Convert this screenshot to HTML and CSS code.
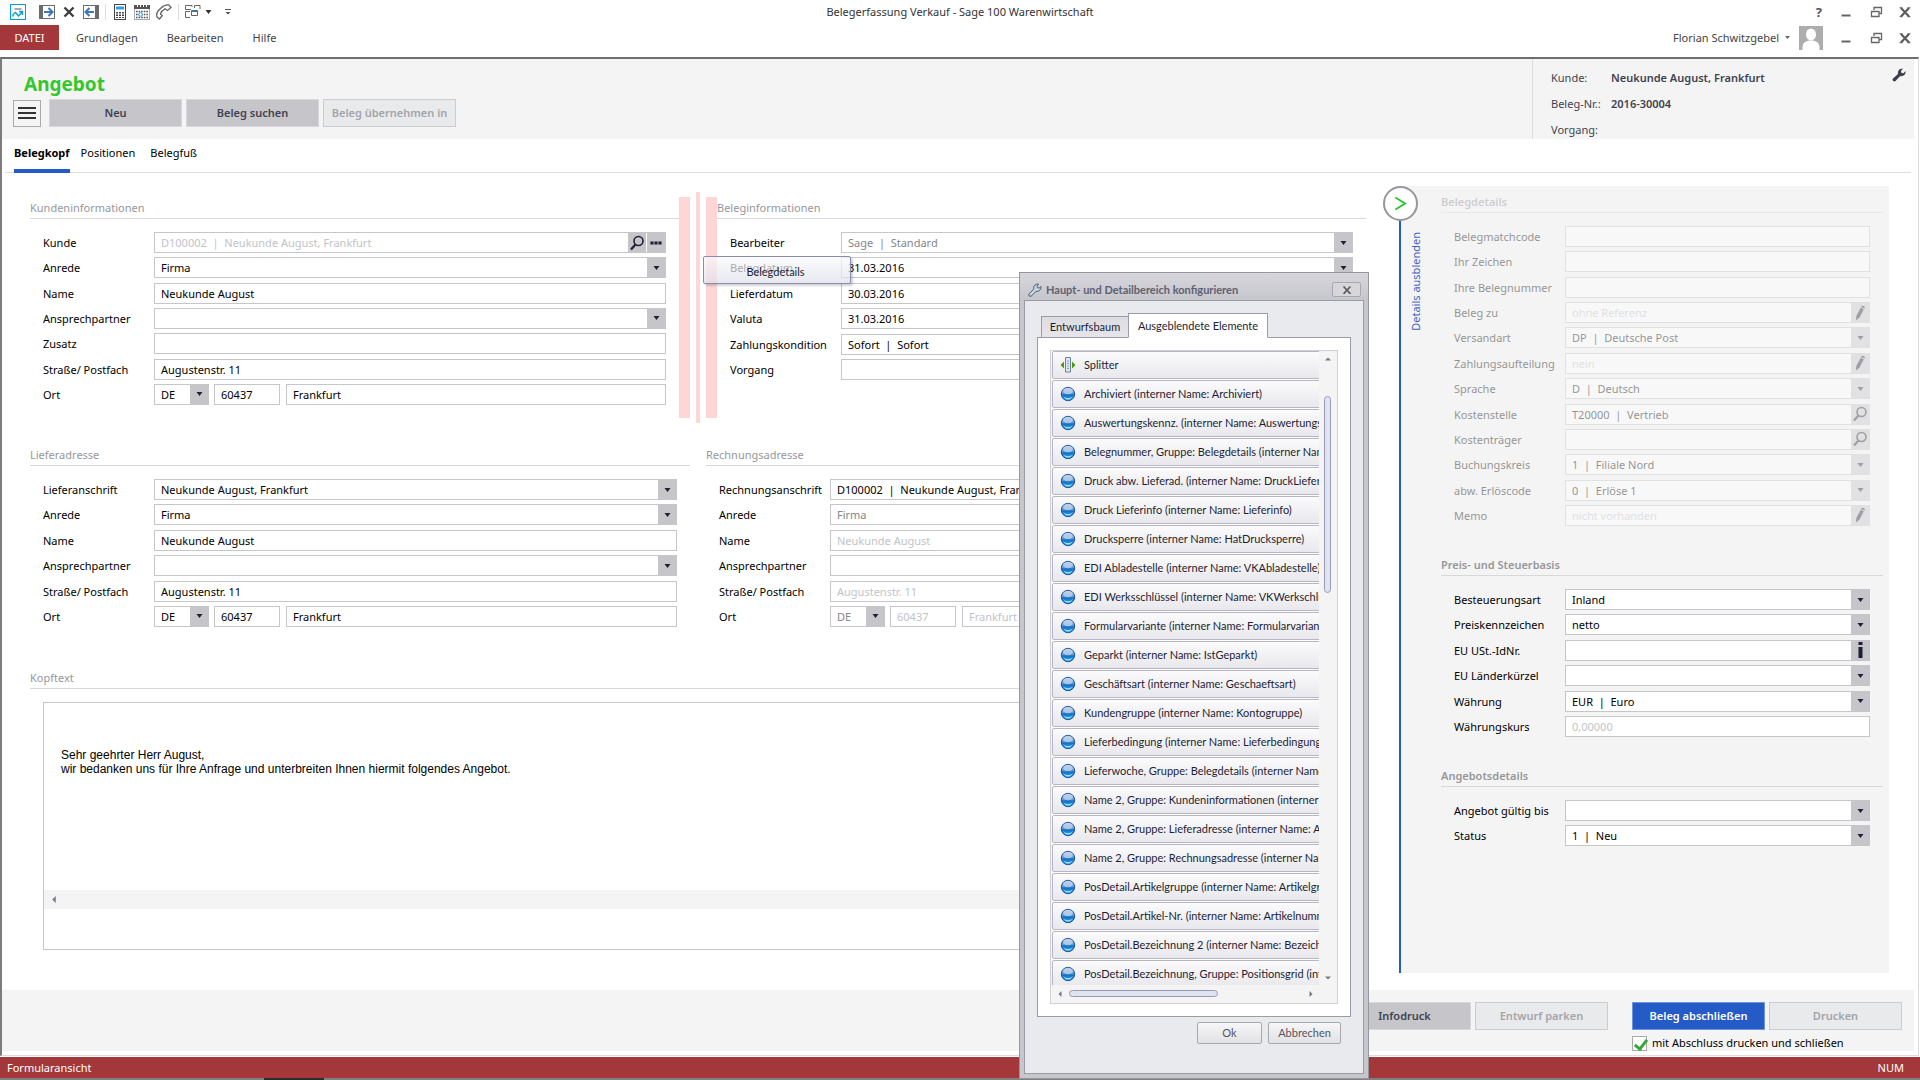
FILE: index.html
```html
<!DOCTYPE html>
<html lang="de">
<head>
<meta charset="utf-8">
<title>Belegerfassung Verkauf - Sage 100 Warenwirtschaft</title>
<link rel="stylesheet" href="styles.css">
</head>
<body>
<svg class="sprite" aria-hidden="true">
  <symbol id="arrow" viewBox="0 0 7 4"><path d="M0.500 0H6.500L3.500 4Z" fill="currentColor"/></symbol>
  <symbol id="lens" viewBox="0 0 16 16"><circle cx="9.500" cy="6" r="4.500" fill="none" stroke="currentColor" stroke-width="1.600"/><path d="M6.500 9.500L2 14.500" stroke="currentColor" stroke-width="2.200"/></symbol>
  <symbol id="pencil" viewBox="0 0 16 18"><path d="M10 1.500L13 3L7.500 13.500L4 16.500L4.300 12Z" fill="currentColor"/><path d="M9.300 3.500L12 5" stroke="#fff" stroke-width="0.800"/></symbol>
  <symbol id="dots" viewBox="0 0 14 5"><path d="M0 0.500h4v4h-4zM5 0.500h4v4h-4zM10 0.500h4v4h-4z" fill="currentColor"/></symbol>
  <symbol id="info" viewBox="0 0 5 17"><path d="M0.500 0h4v3h-4zM0.500 5h4v11h-4z" fill="currentColor"/></symbol>
  <symbol id="min" viewBox="0 0 16 16"><path d="M3.500 10.500h9v2h-9z" fill="#666"/></symbol>
  <symbol id="restore" viewBox="0 0 16 16"><path d="M6 6V3.500H13.500V9.500H11M5.500 3.500H14M3.500 7.500H11V12.500H3.500ZM3 7.500H11.500" fill="none" stroke="#666" stroke-width="1.300"/></symbol>
  <symbol id="cross" viewBox="0 0 16 16"><path d="M4 4L12 12.500M12 4L4 12.500" stroke="#5c5c5c" stroke-width="2.200"/><path d="M2.500 3.800h3M10.500 3.800h3M2.500 12.700h3M10.500 12.700h3" stroke="#5c5c5c" stroke-width="1"/></symbol>
  <symbol id="ball" viewBox="0 0 16 16"><circle cx="8" cy="8" r="6.700" fill="url(#ballFill)" stroke="#1d55a0" stroke-width="1"/><ellipse cx="8" cy="5" rx="5" ry="3.200" fill="#fff" opacity="0.450"/><path d="M2.800 10Q8 17 13.200 10Q8 14.500 2.800 10" fill="#a8e6ff"/></symbol>
  <symbol id="splitter" viewBox="0 0 16 16"><path d="M5.500 0.500H10.500V15H5.500Z" fill="#dce8f0" stroke="#6c8296"/><path d="M8 3.500V13.500" stroke="#44607a" stroke-width="1" stroke-dasharray="1 1.500"/><path d="M4 4.500V11.500L0.500 8ZM12 4.500V11.500L15.500 8Z" fill="#4f9a08"/></symbol>
  <defs><linearGradient id="ballFill" x1="0" y1="0" x2="0" y2="1"><stop offset="0" stop-color="#8fb0d8"/><stop offset="0.500" stop-color="#5c95d0"/><stop offset="0.560" stop-color="#0f6bc0"/><stop offset="1" stop-color="#35b0f0"/></linearGradient></defs>
</svg>

<header class="titlebar">
  <div class="quick">
    <svg class="app-icon" viewBox="0 0 16 16"><rect x="0.500" y="0.500" width="15" height="15" fill="#fff" stroke="#009fda"/><path d="M4.500 5h7" stroke="#555" stroke-width="1"/><path d="M3 12.500V10.500L5.500 8.500L8.500 12L12.500 7.500M12.500 11V7.500H9" fill="none" stroke="#009fda" stroke-width="1.400"/></svg>
    <svg class="ic ic-in" viewBox="0 0 16 14"><path d="M0 0h4v14H0z" fill="#6b6b6b"/><rect x="3.500" y="0.500" width="12" height="13" fill="#fff" stroke="#6b6b6b"/><path d="M5 7H13M9.500 3L13.500 7L9.500 11" fill="none" stroke="#3b78b5" stroke-width="2"/></svg>
    <svg class="ic ic-x" viewBox="0 0 12 12"><path d="M1.500 1.500L10.500 10.500M10.500 1.500L1.500 10.500" stroke="#3f3f3f" stroke-width="2.400"/></svg>
    <svg class="ic ic-out" viewBox="0 0 16 14"><path d="M12 0h4v14h-4z" fill="#6b6b6b"/><rect x="0.500" y="0.500" width="12" height="13" fill="#fff" stroke="#6b6b6b"/><path d="M11 7H3M6.500 3L2.500 7L6.500 11" fill="none" stroke="#3b78b5" stroke-width="2"/></svg>
    <span class="sep"></span>
    <svg class="ic-calc" viewBox="0 0 12 16"><rect x="0.500" y="0.500" width="11" height="15" fill="#fff" stroke="#444"/><path d="M2 2.500h8v3H2z" fill="#2f9bea"/><path d="M2 8h2v1.500H2zM5 8h2v1.500H5zM8 8h2v1.500H8zM2 10.500h2V12H2zM5 10.500h2V12H5zM8 10.500h2V12H8zM2 13h2v1H2zM5 13h2v1H5zM8 13h2v1H8z" fill="#444"/></svg>
    <svg class="ic-cal" viewBox="0 0 16 16"><rect x="0.500" y="1.500" width="15" height="14" fill="#fff" stroke="#aaa"/><path d="M0 1h16v4H0z" fill="#555"/><path d="M3.500 0v3M6.500 0v3M9.500 0v3M12.500 0v3" stroke="#fff"/><path d="M2 7.500h12M2 10.500h12M2 13.500h12" stroke="#555" stroke-width="1.600" stroke-dasharray="1.600 1"/><circle cx="6.500" cy="10.500" r="1.800" fill="#fff" stroke="#2f9bea"/></svg>
    <svg class="ic-tel" viewBox="0 0 16 16"><path d="M1 13Q-0.500 8.500 4.500 4.500Q8.500 0.500 13 1L15 3.500L11.500 6.500L9 4.800Q5.500 6.500 4.500 10L6.300 11.500L3.500 15Z" fill="#fff" stroke="#666" stroke-width="1.300"/></svg>
    <span class="sep"></span>
    <svg class="ic-win" viewBox="0 0 16 14"><path d="M6 4.500H0.500V0.500H7V2M15 4V0.500H9.500V3M5 6.500H0.500V12.500H5M6.500 5.500H12.500V10.500H6.500Z" fill="none" stroke="#666"/><path d="M7 6h6M7 6.500h5" stroke="#3b78b5"/></svg>
    <svg class="tri" viewBox="0 0 7 4"><path d="M0.500 0H6.500L3.500 4Z" fill="#333"/></svg>
    <svg class="more" viewBox="0 0 6 6"><path d="M0 0h6v1H0zM0.500 3h5L3 5.500z" fill="#555"/></svg>
  </div>
  <h1 class="win-title">Belegerfassung Verkauf - Sage 100 Warenwirtschaft</h1>
  <div class="win-ctl">
    <b class="help">?</b>
    <svg><use href="#min"/></svg><svg><use href="#restore"/></svg><svg><use href="#cross"/></svg>
  </div>
</header>

<nav class="menubar">
  <button class="file">DATEI</button>
  <a href="#">Grundlagen</a><a href="#">Bearbeiten</a><a href="#">Hilfe</a>
  <div class="user">
    <span>Florian Schwitzgebel</span>
    <svg class="user-tri" viewBox="0 0 7 4"><path d="M1 0H6L3.500 3Z" fill="#666"/></svg>
    <svg class="avatar" viewBox="0 0 24 24"><path d="M0 0h24v24H0z" fill="#adadad"/><ellipse cx="12" cy="8.500" rx="5" ry="6" fill="#fff"/><path d="M3.500 24Q3 16.500 7 15.500L10 14.500H14L17 15.500Q21 16.500 20.500 24Z" fill="#fff"/></svg>
    <div class="win-ctl"><svg><use href="#min"/></svg><svg><use href="#restore"/></svg><svg><use href="#cross"/></svg></div>
  </div>
</nav>

<div class="frame">
  <header class="doc-head">
    <div class="doc-left">
      <h2>Angebot</h2>
      <div class="actions">
        <button class="burger" aria-label="Menü"><i></i><i></i><i></i></button>
        <button class="btn">Neu</button>
        <button class="btn">Beleg suchen</button>
        <button class="btn off" disabled>Beleg übernehmen in</button>
      </div>
    </div>
    <dl class="doc-info">
      <dt>Kunde:</dt><dd>Neukunde August, Frankfurt</dd>
      <dt>Beleg-Nr.:</dt><dd>2016-30004</dd>
      <dt>Vorgang:</dt><dd></dd>
    </dl>
    <svg class="wrench" viewBox="0 0 14 14"><path d="M1 13L0.500 11L6 6Q5.500 2.500 8 1L11 0.500L9 3L9.500 5L11.500 5.200L13.500 3Q14 7 10.500 8L8 8.200L3 13.500Z" fill="#3b3f4c"/></svg>
  </header>

  <nav class="tabs"><a class="on" href="#">Belegkopf</a><a href="#">Positionen</a><a href="#">Belegfuß</a></nav>

  <div class="content">
    <main class="form">
      <div class="pair split">
        <section>
          <h3>Kundeninformationen</h3>
          <div class="rows r7">
            <div class="row"><label for="k1">Kunde</label><div class="fld"><input class="pale" id="k1" value="D100002 &nbsp;|&nbsp; Neukunde August, Frankfurt"><span class="bt"><svg class="i-lens"><use href="#lens"/></svg></span><span class="bt gap"><svg class="i-dots"><use href="#dots"/></svg></span></div></div>
            <div class="row"><label for="k2">Anrede</label><div class="fld"><select id="k2"><option>Firma</option></select><span class="bt"><svg><use href="#arrow"/></svg></span></div></div>
            <div class="row"><label for="k3">Name</label><div class="fld"><input id="k3" value="Neukunde August"></div></div>
            <div class="row"><label for="k4">Ansprechpartner</label><div class="fld"><select id="k4"><option></option></select><span class="bt"><svg><use href="#arrow"/></svg></span></div></div>
            <div class="row"><label for="k5">Zusatz</label><div class="fld"><input id="k5"></div></div>
            <div class="row"><label for="k6">Straße/ Postfach</label><div class="fld"><input id="k6" value="Augustenstr. 11"></div></div>
            <div class="row"><label for="k7">Ort</label><div class="fld land"><select id="k7"><option>DE</option></select><span class="bt"><svg><use href="#arrow"/></svg></span></div><div class="fld plz"><input aria-label="PLZ" value="60437"></div><div class="fld"><input aria-label="Ort" value="Frankfurt"></div></div>
          </div>
        </section>
        <div class="splitter"><i></i><i class="mid"></i><i></i></div>
        <section>
          <h3>Beleginformationen</h3>
          <div class="rows r6">
            <div class="row"><label for="b1">Bearbeiter</label><div class="fld"><select class="grey" id="b1"><option>Sage &nbsp;|&nbsp; Standard</option></select><span class="bt"><svg><use href="#arrow"/></svg></span></div></div>
            <div class="row"><label for="b2">Belegdatum</label><div class="fld"><select id="b2"><option>31.03.2016</option></select><span class="bt"><svg><use href="#arrow"/></svg></span></div></div>
            <div class="row"><label for="b3">Lieferdatum</label><div class="fld"><select id="b3"><option>30.03.2016</option></select><span class="bt"><svg><use href="#arrow"/></svg></span></div></div>
            <div class="row"><label for="b4">Valuta</label><div class="fld"><select id="b4"><option>31.03.2016</option></select><span class="bt"><svg><use href="#arrow"/></svg></span></div></div>
            <div class="row"><label for="b5">Zahlungskondition</label><div class="fld"><select id="b5"><option>Sofort &nbsp;|&nbsp; Sofort</option></select><span class="bt"><svg><use href="#arrow"/></svg></span></div></div>
            <div class="row"><label for="b6">Vorgang</label><div class="fld"><input id="b6"></div></div>
          </div>
          <div class="ghost">Belegdetails</div>
        </section>
      </div>

      <div class="pair">
        <section>
          <h3>Lieferadresse</h3>
          <div class="rows r6">
            <div class="row"><label for="l1">Lieferanschrift</label><div class="fld"><select id="l1"><option>Neukunde August, Frankfurt</option></select><span class="bt"><svg><use href="#arrow"/></svg></span></div></div>
            <div class="row"><label for="l2">Anrede</label><div class="fld"><select id="l2"><option>Firma</option></select><span class="bt"><svg><use href="#arrow"/></svg></span></div></div>
            <div class="row"><label for="l3">Name</label><div class="fld"><input id="l3" value="Neukunde August"></div></div>
            <div class="row"><label for="l4">Ansprechpartner</label><div class="fld"><select id="l4"><option></option></select><span class="bt"><svg><use href="#arrow"/></svg></span></div></div>
            <div class="row"><label for="l5">Straße/ Postfach</label><div class="fld"><input id="l5" value="Augustenstr. 11"></div></div>
            <div class="row"><label for="l6">Ort</label><div class="fld land"><select id="l6"><option>DE</option></select><span class="bt"><svg><use href="#arrow"/></svg></span></div><div class="fld plz"><input aria-label="PLZ" value="60437"></div><div class="fld"><input aria-label="Ort" value="Frankfurt"></div></div>
          </div>
        </section>
        <section>
          <h3>Rechnungsadresse</h3>
          <div class="rows r6">
            <div class="row"><label for="r1">Rechnungsanschrift</label><div class="fld"><input id="r1" value="D100002 &nbsp;|&nbsp; Neukunde August, Frankfurt"></div></div>
            <div class="row"><label for="r2">Anrede</label><div class="fld"><input class="grey" id="r2" value="Firma"></div></div>
            <div class="row"><label for="r3">Name</label><div class="fld"><input class="pale" id="r3" value="Neukunde August"></div></div>
            <div class="row"><label for="r4">Ansprechpartner</label><div class="fld"><input id="r4"></div></div>
            <div class="row"><label for="r5">Straße/ Postfach</label><div class="fld"><input class="pale" id="r5" value="Augustenstr. 11"></div></div>
            <div class="row"><label for="r6">Ort</label><div class="fld land"><select class="grey" id="r6"><option>DE</option></select><span class="bt"><svg><use href="#arrow"/></svg></span></div><div class="fld plz"><input class="pale" aria-label="PLZ" value="60437"></div><div class="fld"><input class="pale" aria-label="Ort" value="Frankfurt"></div></div>
          </div>
        </section>
      </div>

      <section class="kopf">
        <h3>Kopftext</h3>
        <div class="editor">
          <div class="text">Sehr geehrter Herr August,<br>wir bedanken uns für Ihre Anfrage und unterbreiten Ihnen hiermit folgendes Angebot.</div>
          <div class="hbar"><svg viewBox="0 0 4 8"><path d="M4 0V8L0 4Z" fill="#777785"/></svg></div>
        </div>
      </section>
    </main>

    <aside class="details">
      <div class="rail">
        <button class="round" aria-label="Details ausblenden"><svg viewBox="0 0 14 16"><path d="M1.500 1.500L12 8L1.500 14.500" fill="none" stroke="#2cc42c" stroke-width="2"/></svg></button>
        <a href="#">Details ausblenden</a>
      </div>
      <div class="panel">
        <section class="faded">
          <h3>Belegdetails</h3>
          <div class="rows r12">
            <div class="row"><label for="d1">Belegmatchcode</label><div class="fld"><input id="d1"></div></div>
            <div class="row"><label for="d2">Ihr Zeichen</label><div class="fld"><input id="d2"></div></div>
            <div class="row"><label for="d3">Ihre Belegnummer</label><div class="fld"><input id="d3"></div></div>
            <div class="row"><label for="d4">Beleg zu</label><div class="fld"><input class="pale" id="d4" value="ohne Referenz"><span class="bt"><svg class="i-pen"><use href="#pencil"/></svg></span></div></div>
            <div class="row"><label for="d5">Versandart</label><div class="fld"><select id="d5"><option>DP &nbsp;|&nbsp; Deutsche Post</option></select><span class="bt"><svg><use href="#arrow"/></svg></span></div></div>
            <div class="row"><label for="d6">Zahlungsaufteilung</label><div class="fld"><input class="pale" id="d6" value="nein"><span class="bt"><svg class="i-pen"><use href="#pencil"/></svg></span></div></div>
            <div class="row"><label for="d7">Sprache</label><div class="fld"><select id="d7"><option>D &nbsp;|&nbsp; Deutsch</option></select><span class="bt"><svg><use href="#arrow"/></svg></span></div></div>
            <div class="row"><label for="d8">Kostenstelle</label><div class="fld"><input id="d8" value="T20000 &nbsp;|&nbsp; Vertrieb"><span class="bt"><svg class="i-lens"><use href="#lens"/></svg></span></div></div>
            <div class="row"><label for="d9">Kostenträger</label><div class="fld"><input id="d9"><span class="bt"><svg class="i-lens"><use href="#lens"/></svg></span></div></div>
            <div class="row"><label for="d10">Buchungskreis</label><div class="fld"><select id="d10"><option>1 &nbsp;|&nbsp; Filiale Nord</option></select><span class="bt"><svg><use href="#arrow"/></svg></span></div></div>
            <div class="row"><label for="d11">abw. Erlöscode</label><div class="fld"><select id="d11"><option>0 &nbsp;|&nbsp; Erlöse 1</option></select><span class="bt"><svg><use href="#arrow"/></svg></span></div></div>
            <div class="row"><label for="d12">Memo</label><div class="fld"><input class="pale" id="d12" value="nicht vorhanden"><span class="bt"><svg class="i-pen"><use href="#pencil"/></svg></span></div></div>
          </div>
        </section>
        <section>
          <h3>Preis- und Steuerbasis</h3>
          <div class="rows r6">
            <div class="row"><label for="p1">Besteuerungsart</label><div class="fld"><select id="p1"><option>Inland</option></select><span class="bt"><svg><use href="#arrow"/></svg></span></div></div>
            <div class="row"><label for="p2">Preiskennzeichen</label><div class="fld"><select id="p2"><option>netto</option></select><span class="bt"><svg><use href="#arrow"/></svg></span></div></div>
            <div class="row"><label for="p3">EU USt.-IdNr.</label><div class="fld"><input id="p3"><span class="bt"><svg class="i-info"><use href="#info"/></svg></span></div></div>
            <div class="row"><label for="p4">EU Länderkürzel</label><div class="fld"><select id="p4"><option></option></select><span class="bt"><svg><use href="#arrow"/></svg></span></div></div>
            <div class="row"><label for="p5">Währung</label><div class="fld"><select id="p5"><option>EUR &nbsp;|&nbsp; Euro</option></select><span class="bt"><svg><use href="#arrow"/></svg></span></div></div>
            <div class="row"><label for="p6">Währungskurs</label><div class="fld"><input class="pale" id="p6" value="0,00000"></div></div>
          </div>
        </section>
        <section>
          <h3>Angebotsdetails</h3>
          <div class="rows r2">
            <div class="row"><label for="a1">Angebot gültig bis</label><div class="fld"><select id="a1"><option></option></select><span class="bt"><svg><use href="#arrow"/></svg></span></div></div>
            <div class="row"><label for="a2">Status</label><div class="fld"><select id="a2"><option>1 &nbsp;|&nbsp; Neu</option></select><span class="bt"><svg><use href="#arrow"/></svg></span></div></div>
          </div>
        </section>
      </div>
    </aside>
  </div>

  <footer class="doc-foot">
    <button class="btn">Infodruck</button>
    <button class="btn off" disabled>Entwurf parken</button>
    <div class="finish">
      <div class="finish-btns"><button class="btn blue">Beleg abschließen</button><button class="btn off" disabled>Drucken</button></div>
      <label class="check"><input type="checkbox" checked>mit Abschluss drucken und schließen</label>
    </div>
  </footer>
</div>

<footer class="status"><span>Formularansicht</span><span>NUM</span></footer>
<div class="task"><i></i></div>

<div class="dialog" role="dialog" aria-labelledby="dlg">
  <header>
    <svg viewBox="0 0 14 14"><path d="M1 13L0.800 11L5.500 6.500Q5 2.500 8 1.200L10.500 1L9 3L9.500 4.800L11.200 5L13.200 3.500Q13.500 7 10.500 8.200L8 8.500L3 13.300Z" fill="#c4d4e2" stroke="#4f6478" stroke-width="1"/></svg>
    <h2 id="dlg">Haupt- und Detailbereich konfigurieren</h2>
    <button class="x" aria-label="Schließen"><svg viewBox="0 0 16 16"><use href="#cross"/></svg></button>
  </header>
  <div class="dlg-body">
    <div class="dlg-tabs"><button>Entwurfsbaum</button><button class="on">Ausgeblendete Elemente</button></div>
    <div class="dlg-page">
      <div class="list">
        <ul>
          <li><svg><use href="#splitter"/></svg>Splitter</li>
          <li><svg><use href="#ball"/></svg>Archiviert (interner Name: Archiviert)</li>
          <li><svg><use href="#ball"/></svg>Auswertungskennz. (interner Name: Auswertungskennz)</li>
          <li><svg><use href="#ball"/></svg>Belegnummer, Gruppe: Belegdetails (interner Name: Belegnummer)</li>
          <li><svg><use href="#ball"/></svg>Druck abw. Lieferad. (interner Name: DruckLieferadresse)</li>
          <li><svg><use href="#ball"/></svg>Druck Lieferinfo (interner Name: Lieferinfo)</li>
          <li><svg><use href="#ball"/></svg>Drucksperre (interner Name: HatDrucksperre)</li>
          <li><svg><use href="#ball"/></svg>EDI Abladestelle (interner Name: VKAbladestelle)</li>
          <li><svg><use href="#ball"/></svg>EDI Werksschlüssel (interner Name: VKWerkschluessel)</li>
          <li><svg><use href="#ball"/></svg>Formularvariante (interner Name: Formularvariante)</li>
          <li><svg><use href="#ball"/></svg>Geparkt (interner Name: IstGeparkt)</li>
          <li><svg><use href="#ball"/></svg>Geschäftsart (interner Name: Geschaeftsart)</li>
          <li><svg><use href="#ball"/></svg>Kundengruppe (interner Name: Kontogruppe)</li>
          <li><svg><use href="#ball"/></svg>Lieferbedingung (interner Name: Lieferbedingung)</li>
          <li><svg><use href="#ball"/></svg>Lieferwoche, Gruppe: Belegdetails (interner Name: Lieferwoche)</li>
          <li><svg><use href="#ball"/></svg>Name 2, Gruppe: Kundeninformationen (interner Name: Name2)</li>
          <li><svg><use href="#ball"/></svg>Name 2, Gruppe: Lieferadresse (interner Name: AName2)</li>
          <li><svg><use href="#ball"/></svg>Name 2, Gruppe: Rechnungsadresse (interner Name: Name2)</li>
          <li><svg><use href="#ball"/></svg>PosDetail.Artikelgruppe (interner Name: Artikelgruppe)</li>
          <li><svg><use href="#ball"/></svg>PosDetail.Artikel-Nr. (interner Name: Artikelnummer)</li>
          <li><svg><use href="#ball"/></svg>PosDetail.Bezeichnung 2 (interner Name: Bezeichnung2)</li>
          <li><svg><use href="#ball"/></svg>PosDetail.Bezeichnung, Gruppe: Positionsgrid (interner Name: Bezeichnung)</li>
        </ul>
        <div class="vs"><svg viewBox="0 0 6 4"><path d="M0 3.500L3 0.500L6 3.500Z" fill="#777785"/></svg><i></i><svg viewBox="0 0 6 4"><path d="M0 0.500L3 3.500L6 0.500Z" fill="#777785"/></svg></div>
        <div class="hs"><svg viewBox="0 0 4 6"><path d="M3.500 0L0.500 3L3.500 6Z" fill="#777785"/></svg><i></i><svg viewBox="0 0 4 6"><path d="M0.500 0L3.500 3L0.500 6Z" fill="#777785"/></svg></div>
      </div>
    </div>
    <div class="dlg-foot"><button>Ok</button><button>Abbrechen</button></div>
  </div>
</div>
</body>
</html>
```
FILE: styles.css
```css
* { box-sizing: border-box; }
body {
  margin: 0;
  min-height: 100vh;
  display: flex;
  flex-direction: column;
  position: relative;
  background: #fff;
  color: #000;
  font: 11px/16px "Noto Sans", "Open Sans", sans-serif;
}
h1, h2, h3, dl, dd, ul { margin: 0; padding: 0; font-weight: 400; }
h1 { font-size: 11px; }
button, input, select { font: inherit; color: inherit; margin: 0; }
button { padding: 0; white-space: nowrap; }
a { color: inherit; text-decoration: none; }
svg { display: block; flex: none; }
.sprite { position: absolute; width: 0; height: 0; }

/* window title and menu */
.titlebar { height: 25px; display: grid; grid-template-columns: 1fr auto 1fr; align-items: center; color: #333; padding-bottom: 2px; }
.quick { display: flex; align-items: center; padding-left: 10px; }
.app-icon { width: 16px; height: 16px; margin-right: 13px; }
.ic { width: 16px; height: 14px; }
.ic-x { width: 12px; height: 12px; margin: 0 8px; }
.sep { width: 1px; height: 16px; background: #ddd; margin: 0 6px; }
.ic-calc { width: 12px; height: 16px; margin: 0 8px 0 2px; }
.ic-cal { width: 16px; height: 16px; margin-right: 6px; }
.ic-tel { width: 16px; height: 16px; }
.ic-win { width: 16px; height: 14px; margin-right: 4px; }
.tri { width: 7px; height: 4px; }
.more { width: 6px; height: 6px; margin-left: 13px; }
.win-ctl { display: flex; justify-content: flex-end; align-items: center; gap: 14px; padding-right: 7px; }
.win-ctl svg { width: 16px; height: 16px; }
.win-ctl svg:last-child { margin-left: -1px; }
.help { font-size: 13px; color: #555; margin-right: 2px; }
.menubar { height: 25px; display: flex; align-items: center; color: #444; margin-bottom: 7px; }
.menubar a { margin-right: 29px; }
.file { width: 59px; height: 25px; border: 0; background: #a4373a; color: #fff; margin-right: 17px; }
.user { margin-left: auto; display: flex; align-items: center; }
.user-tri { width: 7px; height: 4px; margin: 0 8px 0 5px; }
.avatar { width: 24px; height: 24px; margin-right: 15px; }

/* document frame */
.frame { flex: 1; display: flex; flex-direction: column; margin: 0 1px 1px 0; border: solid; border-width: 2px 1px 1px 2px; border-color: #6e6e6e #ddd #ddd #7c7c7c; }
.doc-head { min-height: 80px; background: #f4f4f4; margin-right: 4px; display: flex; }
.doc-left { flex: 1; padding: 14px 0 0 11px; }
.doc-left h2 { font-size: 19px; line-height: 22px; font-weight: 700; color: #33c62f; padding-left: 11px; }
.actions { display: flex; gap: 4px; margin-top: 4px; align-items: center; }
.burger { width: 28px; height: 27px; margin-right: 4px; background: #f4f4f4; border: 1px solid #a8a8ad; display: flex; flex-direction: column; justify-content: center; align-items: center; gap: 3px; }
.burger i { width: 18px; height: 2px; background: #333; }
.btn { width: 133px; height: 28px; background: #c5c5ca; border: 1px solid #d8d8dc; color: #3f4350; font-weight: 600; }
.btn.off { background: #e9eaec; border-color: #cdcdd1; color: #a3a4aa; }
.btn.blue { background: #255bc7; border-color: #6f93dc; color: #fff; }
.doc-info { width: 361px; border-left: 1px solid #ddd; padding: 10px 0 0 18px; display: grid; grid-template-columns: 60px 1fr; align-content: start; row-gap: 8px; line-height: 18px; color: #3f4350; }
.doc-info dd { font-weight: 600; }
.wrench { width: 14px; height: 14px; margin: 9px 8px 0 -1px; }

.tabs { height: 34px; margin: 0 7px 0 3px; padding-left: 9px; display: flex; border-bottom: 1px solid #ddd; }
.tabs a { line-height: 28px; height: 34px; margin-right: 11px; }
.tabs a:nth-child(2) { margin-right: 15px; }
.tabs .on { font-weight: 700; border-bottom: 4px solid #255bc7; }

.content { flex: 1; display: flex; align-items: flex-start; padding: 13px 29px 17px 28px; }
.form { flex: 1; min-width: 0; padding-top: 11px; margin-right: 17px; }
.pair { display: flex; gap: 16px; margin-bottom: 40px; }
.pair.split { gap: 0; margin-bottom: 26px; }
.pair > section { flex: 1 1 0; min-width: 0; position: relative; }
h3 { font-size: 11px; line-height: 21px; color: #96979c; border-bottom: 1px solid #d8d8da; }
.rows { margin: 13px 13px 0; display: flex; flex-direction: column; justify-content: space-between; }
.r2 { min-height: 46px; }
.r6 { min-height: 148px; }
.r7 { min-height: 173px; }
.r12 { min-height: 300px; }
.row { display: flex; }
.row label { flex: none; width: 111px; line-height: 22px; height: 21px; white-space: nowrap; }
.fld { flex: 1; min-width: 0; height: 21px; display: flex; background: #fff; border: 1px solid #c5c5ca; }
.fld input, .fld select { flex: 1; min-width: 0; width: 0; border: 0; padding: 1px 0 0 6px; background: none; appearance: none; outline: 0; }
.fld.land { flex: none; width: 55px; margin-right: 5px; }
.fld.plz { flex: none; width: 66px; margin-right: 6px; }
.grey { color: #85868b; }
.pale { color: #c2c3c8; }
.bt { width: 18px; background: #c5c5ca; color: #1f2033; display: flex; align-items: center; justify-content: center; }
.bt.gap { border-left: 1px solid #fff; width: 19px; }
.bt svg { width: 7px; height: 4px; }
.bt .i-lens { width: 16px; height: 16px; }
.bt .i-pen { width: 16px; height: 18px; }
.bt .i-dots { width: 12px; height: 4px; }
.bt .i-info { width: 5px; height: 17px; }

.splitter { width: 38px; min-height: 221px; display: flex; gap: 6px; }
.splitter i { width: 11px; background: #ffd6d6; }
.splitter .mid { width: 4px; margin: -5px 0; }
.ghost { position: absolute; left: -14px; top: 59px; width: 148px; height: 28px; border: 1px solid #8a8cab; border-radius: 2px; background: linear-gradient(rgba(250,250,253,.7), rgba(222,224,234,.7)); box-shadow: 2px 2px 2px rgba(80,80,110,.25); text-align: center; line-height: 29px; padding-right: 3px; color: #1e1e32; font-family: Lato, sans-serif; }

.editor { margin: 13px 13px 0; height: 248px; border: 1px solid #c5c5ca; font: 12px/14px "Liberation Sans", Arial, sans-serif; }
.editor .text { height: 187px; padding: 45px 17px 0; }
.hbar { height: 19px; background: #f4f4f4; padding: 6px 8px; }
.hbar svg { width: 4px; height: 7px; }

/* detail column */
.details { display: flex; width: 506px; min-height: 787px; }
.rail { width: 34px; position: relative; z-index: 1; display: flex; justify-content: center; }
.rail::before { content: ""; width: 2px; margin-top: 34px; background: #255bc7; }
.round { position: absolute; top: 0; left: 0; width: 35px; height: 35px; border: 2px solid #96979c; border-radius: 50%; background: #fff; display: flex; align-items: center; justify-content: center; }
.round svg { width: 13px; height: 15px; }
.rail a { position: absolute; left: 24px; top: 46px; writing-mode: vertical-rl; transform: rotate(180deg); color: #3c63c4; white-space: nowrap; line-height: 18px; }
.panel { flex: 1; margin-left: -16px; padding: 5px 6px 0 40px; background: #f4f4f4; }
.panel section { margin-bottom: 28px; }
.panel h3 { font-weight: 600; }
.faded { opacity: .4; }

.doc-foot { min-height: 61px; margin: 0 4px 4px 0; padding: 12px 12px 0; background: #f4f4f4; display: flex; justify-content: flex-end; gap: 4px; }
.finish { margin-left: 20px; }
.finish-btns { display: flex; gap: 4px; }
.check { display: flex; align-items: center; gap: 5px; margin-top: 5px; }
.check input { appearance: none; width: 15px; height: 15px; margin: 0; border: 1px solid #a8a8ad; background: #fff; position: relative; }
.check input:checked::after { content: ""; position: absolute; left: 4px; top: 0; width: 5px; height: 10px; border: solid #35a835; border-width: 0 3px 3px 0; transform: rotate(38deg); }

.status { height: 21px; background: #a4373a; color: #fff; display: flex; justify-content: space-between; align-items: center; padding: 0 16px 0 7px; }
.task { height: 2px; background: #808080; padding-left: 264px; }
.task i { display: block; width: 60px; height: 2px; background: #2c2c2c; }

/* configuration dialog */
.dialog { position: absolute; left: 1019px; top: 272px; bottom: 1px; width: 350px; padding: 0 4px 4px; border: 1px solid #96979c; background: #c6c6cd; color: #1e1e32; display: flex; flex-direction: column; font-family: Lato, sans-serif; }
.dialog header { height: 27px; margin: 0 -4px; padding: 6px 7px 0 8px; display: flex; align-items: center; background: linear-gradient(#d6d6db, #c6c6cd); }
.dialog header svg { width: 14px; height: 14px; }
.dialog h2 { flex: 1; margin-left: 4px; font-size: 11px; font-weight: 700; color: #5f6070; white-space: nowrap; }
.dialog .x { width: 29px; height: 15px; border: 1px solid #a8a8b0; border-radius: 2px; background: #d6d6db; display: flex; align-items: center; justify-content: center; }
.dialog .x svg { width: 12px; height: 12px; }
.dlg-body { flex: 1; display: flex; flex-direction: column; background: #e9eaee; border: 1px solid #9a9ba6; padding: 12px 12px 0; min-height: 0; }
.dlg-tabs { display: flex; align-items: flex-end; padding-left: 4px; position: relative; margin-bottom: -1px; }
.dlg-tabs button { height: 22px; width: 88px; border: 1px solid #9a9ba6; background: linear-gradient(#dcdce1, #e6e6ea); }
.dlg-tabs .on { height: 25px; width: 140px; margin-left: -1px; background: #fff; border-bottom-color: #fff; }
.dlg-page { flex: 1; min-height: 0; background: #fff; border: 1px solid #9a9ba6; padding: 12px; }
.list { height: 100%; border: 1px solid #d0d0d6; padding: 0 1px 1px; display: grid; grid-template: minmax(0, 1fr) 17px / minmax(0, 1fr) 17px; background: #f4f4f4; }
.list ul { list-style: none; overflow: hidden; background: #fff; }
.list li { height: 28px; margin-bottom: 1px; width: 400px; display: flex; align-items: center; gap: 8px; padding-left: 7px; border: 1px solid #b6b6c6; border-radius: 2px; background: linear-gradient(#fbfbfc, #e8e8ed); white-space: nowrap; }
.list li svg { width: 16px; height: 16px; }
.vs, .hs { display: flex; align-items: center; justify-content: space-between; }
.vs { flex-direction: column; padding: 6px 0 5px; }
.vs svg { width: 6px; height: 4px; }
.vs i { width: 7px; height: 197px; margin: 35px 0 auto; border: 1px solid #9a9bb0; border-radius: 4px; background: #dfe4f2; }
.hs { padding: 0 6px; }
.hs svg { width: 4px; height: 6px; }
.hs i { height: 7px; width: 149px; margin: 0 auto 0 7px; border: 1px solid #9a9bb0; border-radius: 4px; background: #dfe4f2; }
.dlg-foot { display: flex; justify-content: flex-end; gap: 6px; padding: 5px 10px 29px; }
.dlg-foot button { width: 73px; height: 22px; border: 1px solid #a8a8ad; border-radius: 2px; background: linear-gradient(#f6f6f8, #e2e2e4); color: #55565f; }
.dlg-foot button:first-child { width: 65px; }
```
